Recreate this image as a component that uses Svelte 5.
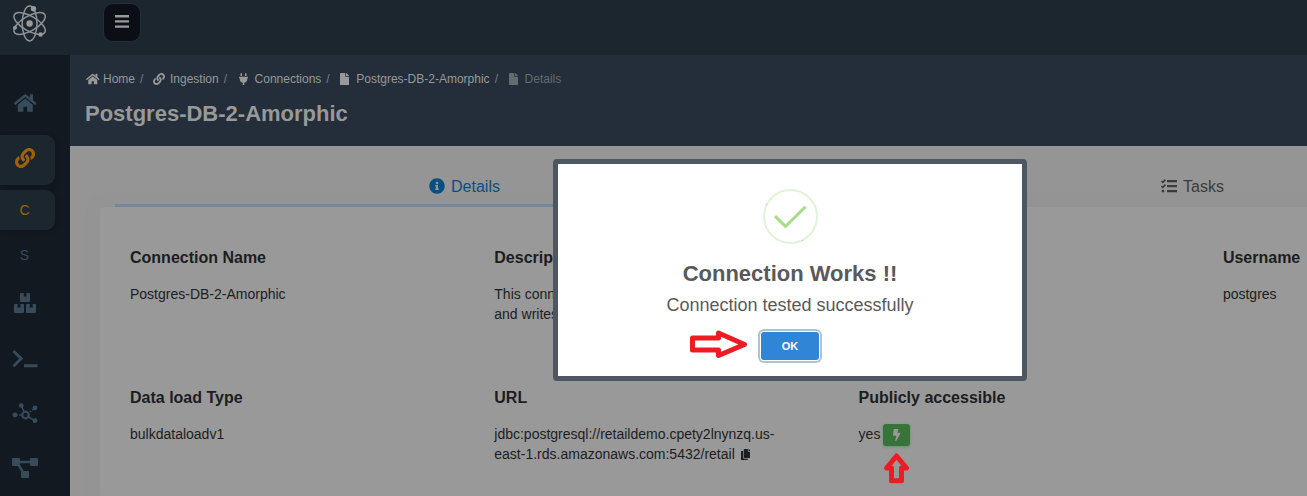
<script>
  const icons = {
    home: { w: 576, d: 'M280.37 148.26L96 300.11V464a16 16 0 0 0 16 16l112.06-.29a16 16 0 0 0 15.92-16V368a16 16 0 0 1 16-16h64a16 16 0 0 1 16 16v95.64a16 16 0 0 0 16 16.05L464 480a16 16 0 0 0 16-16V300L295.67 148.26a12.19 12.19 0 0 0-15.3 0zM571.6 251.47L488 182.56V44.05a12 12 0 0 0-12-12h-56a12 12 0 0 0-12 12v72.61L318.47 43a48 48 0 0 0-61 0L4.34 251.47a12 12 0 0 0-1.6 16.9l25.5 31A12 12 0 0 0 45.15 301l235.22-193.74a12.19 12.19 0 0 1 15.3 0L530.9 301a12 12 0 0 0 16.9-1.6l25.5-31a12 12 0 0 0-1.7-16.93z' },
    link: { w: 512, d: 'M326.612 185.391c59.747 59.809 58.927 155.698.36 214.59-.11.12-.24.25-.36.37l-67.2 67.2c-59.27 59.27-155.699 59.262-214.96 0-59.27-59.26-59.27-155.7 0-214.96l37.106-37.106c9.84-9.84 26.786-3.3 27.294 10.606.648 17.722 3.826 35.527 9.69 52.721 1.986 5.822.567 12.262-3.783 16.612l-13.087 13.087c-28.026 28.026-28.905 73.66-1.155 101.96 28.024 28.579 74.086 28.749 102.325.51l67.2-67.19c28.191-28.191 28.073-73.757 0-101.83-3.701-3.694-7.429-6.564-10.341-8.569a16.037 16.037 0 0 1-6.947-12.606c-.396-10.567 3.348-21.456 11.698-29.806l21.054-21.055c5.521-5.521 14.182-6.199 20.584-1.731a152.482 152.482 0 0 1 20.522 17.197zM467.547 44.449c-59.261-59.262-155.69-59.27-214.96 0l-67.2 67.2c-.12.12-.25.25-.36.37-58.566 58.892-59.387 154.781.36 214.59a152.454 152.454 0 0 0 20.521 17.196c6.402 4.468 15.064 3.789 20.584-1.731l21.054-21.055c8.35-8.35 12.094-19.239 11.698-29.806a16.037 16.037 0 0 0-6.947-12.606c-2.912-2.005-6.64-4.875-10.341-8.569-28.073-28.073-28.191-73.639 0-101.83l67.2-67.19c28.239-28.239 74.3-28.069 102.325.51 27.75 28.3 26.872 73.934-1.155 101.96l-13.087 13.087c-4.35 4.35-5.769 10.79-3.783 16.612 5.864 17.194 9.042 34.999 9.69 52.721.509 13.906 17.454 20.446 27.294 10.606l37.106-37.106c59.271-59.259 59.271-155.699.001-214.959z' },
    plug: { w: 384, d: 'M320,32a32,32,0,0,0-64,0v96h64Zm48,128H16A16,16,0,0,0,0,176v32a16,16,0,0,0,16,16H32v32A160.07,160.07,0,0,0,160,412.8V512h64V412.8A160.07,160.07,0,0,0,352,256V224h16a16,16,0,0,0,16-16V176A16,16,0,0,0,368,160ZM128,32a32,32,0,0,0-64,0v96h64Z' },
    file: { w: 384, d: 'M224 136V0H24C10.7 0 0 10.7 0 24v464c0 13.3 10.7 24 24 24h336c13.3 0 24-10.7 24-24V160H248c-13.2 0-24-10.8-24-24zm160-14.1v6.1H256V0h6.1c6.4 0 12.5 2.5 17 7l97.9 98c4.5 4.5 7 10.6 7 16.9z' },
    copy: { w: 448, d: 'M320 448v40c0 13.255-10.745 24-24 24H24c-13.255 0-24-10.745-24-24V120c0-13.255 10.745-24 24-24h72v296c0 30.879 25.121 56 56 56h168zm0-344V0H152c-13.255 0-24 10.745-24 24v368c0 13.255 10.745 24 24 24h272c13.255 0 24-10.745 24-24V128H344c-13.2 0-24-10.8-24-24zm120.971-31.029L375.029 7.029A24 24 0 0 0 358.059 0H352v96h96v-6.059a24 24 0 0 0-7.029-16.97z' },
    bolt: { w: 320, d: 'M296 160H180.6l42.6-129.8C227.2 15 215.7 0 200 0H56C44 0 33.8 8.9 32.2 20.8l-32 240C-1.7 275.2 9.5 288 24 288h118.7L96.6 482.5c-3.6 15.2 8 29.5 23.3 29.5 8.4 0 16.4-4.4 20.8-12l176-304c9.3-15.9-2.2-36-20.7-36z' },
    info: { w: 512, d: 'M256 8C119.043 8 8 119.083 8 256c0 136.997 111.043 248 248 248s248-111.003 248-248C504 119.083 392.957 8 256 8zm0 110c23.196 0 42 18.804 42 42s-18.804 42-42 42-42-18.804-42-42 18.804-42 42-42zm56 254c0 6.627-5.373 12-12 12h-88c-6.627 0-12-5.373-12-12v-24c0-6.627 5.373-12 12-12h12v-64h-12c-6.627 0-12-5.373-12-12v-24c0-6.627 5.373-12 12-12h64c6.627 0 12 5.373 12 12v100h12c6.627 0 12 5.373 12 12v24z' }
  };
  const crumbs = [
    { icon: 'home', label: 'Home' },
    { icon: 'link', label: 'Ingestion' },
    { icon: 'plug', label: 'Connections' },
    { icon: 'file', label: 'Postgres-DB-2-Amorphic' },
    { icon: 'file', label: 'Details' }
  ];
</script>

{#snippet fa(name, size)}
  <svg class="fa" viewBox="0 0 {icons[name].w} 512" width={(icons[name].w / 512) * size} height={size}><path d={icons[name].d} /></svg>
{/snippet}

<div class="app">
  <header class="topbar">
    <div class="brand">
      <svg width="37" height="41" viewBox="0 0 37 41" fill="none" stroke="#8f9396" stroke-width="1.5">
        <ellipse cx="18.6" cy="20.5" rx="7.4" ry="17.4" />
        <ellipse cx="18.6" cy="20.5" rx="7.4" ry="17.6" transform="rotate(60 18.6 20.5)" />
        <ellipse cx="18.6" cy="20.5" rx="7.4" ry="17.6" transform="rotate(-60 18.6 20.5)" />
        <g fill="#999" stroke="none"><circle cx="18.6" cy="20.5" r="3.2" /><circle cx="22.5" cy="5.7" r="2.7" /><circle cx="4" cy="24.8" r="2" /><circle cx="29.6" cy="31.5" r="2.3" /></g>
      </svg>
    </div>
    <button class="menu" aria-label="Menu">
      <svg width="14" height="13" viewBox="0 0 14 13"><path d="M0 0h14v2.4H0zM0 5.2h14v2.4H0zM0 10.4h14v2.4H0z" /></svg>
    </button>
  </header>

  <div class="body">
    <nav class="side">
      <div class="item home">{@render fa('home', 20)}</div>
      <div class="item active">{@render fa('link', 20)}</div>
      <div class="item sub active">C</div>
      <div class="item sub">S</div>
      <div class="item tool boxes">
        <svg width="24" height="20" viewBox="0 0 24 20"><path d="M8 0h2.8v4l1.2-.8 1.4.8V0H16q1 0 1 1v7q0 1-1 1H8Q7 9 7 8V1q0-1 1-1zM2 11h2.6v4l1.4-.8 1.4.8v-4H10q1 0 1 1v7q0 1-1 1H2q-1 0-1-1v-7q0-1 1-1zM14 11h2.8v4l1.4-.8 1.4.8v-4H22q1 0 1 1v7q0 1-1 1h-8q-1 0-1-1v-7q0-1 1-1z" /></svg>
      </div>
      <div class="item tool">
        <svg width="26" height="20" viewBox="0 0 26 20" fill="none" stroke="#374b5b" stroke-width="2.9" stroke-linejoin="miter"><path d="M1.4 2l7.8 7.6-7.8 7.6M12 16.8h13.5" /></svg>
      </div>
      <div class="item tool">
        <svg width="26" height="21" viewBox="0 0 26 21"><circle cx="13.5" cy="12" r="3.3" fill="none" stroke="#374b5b" stroke-width="2.2" /><path d="M9.5 3l2.5 5.8M16 13.5l7 4.3M3 12h2.8M7.2 12h2M17.7 9l1.4-1M20.2 7.2l2-1.6" fill="none" stroke="#374b5b" stroke-width="1.5" /><circle cx="9.3" cy="2.6" r="2.4" /><circle cx="2.9" cy="12" r="2.4" /><circle cx="23" cy="5" r="2.4" /><circle cx="23" cy="17.7" r="2.4" /></svg>
      </div>
      <div class="item tool flow">
        <svg width="26" height="20" viewBox="0 0 26 20"><rect width="8" height="8" rx="1" /><rect x="18" width="8" height="8" rx="1" /><rect x="9" y="13" width="8" height="7" rx="1" /><path d="M7 2.8h12v2.5H7zM5.2 7l2.2-1.3 4.4 7.2-2.2 1.3z" /></svg>
      </div>
    </nav>

    <main>
      <section class="heading">
        <div class="crumbs">
          {#each crumbs as c, i}
            <span class="crumb c{i}"><i>{@render fa(c.icon, 12)}</i><span class="label">{c.label}</span></span>{#if i < 4}<span class="slash">/</span>{/if}
          {/each}
        </div>
        <h1>Postgres-DB-2-Amorphic</h1>
      </section>

      <section class="content">
        <div class="tabs">
          <div class="tab selected">{@render fa('info', 16)}<span>Details</span></div>
          <div class="tab">
            <svg width="16" height="14" viewBox="0 0 16 14"><path d="M6 1h10v2.2H6zM6 6h10v2.2H6zM6 11h10v2.2H6z" /><path d="M.5 2l1.3 1.3L4.5.6M.5 7l1.3 1.3 2.7-2.7" fill="none" stroke="#393b3d" stroke-width="1.6" /><circle cx="2" cy="12.1" r="1.4" /></svg><span>Tasks</span>
          </div>
        </div>
        <div class="card">
          <div class="field"><h2>Connection Name</h2><p>Postgres-DB-2-Amorphic</p></div>
          <div class="field"><h2>Description</h2><p>This connection reads data<br />and writes</p></div>
          <div class="field"></div>
          <div class="field"><h2>Username</h2><p>postgres</p></div>
          <div class="field"><h2>Data load Type</h2><p>bulkdataloadv1</p></div>
          <div class="field"><h2>URL</h2><p>jdbc:postgresql://retaildemo.cpety2lnynzq.us-<br />east-1.rds.amazonaws.com:5432/retail <span class="copy">{@render fa('copy', 11)}</span></p></div>
          <div class="field"><h2>Publicly accessible</h2><p class="access">yes <button class="test" aria-label="Test connection">{@render fa('bolt', 12)}</button></p></div>
        </div>
      </section>
    </main>
  </div>

  <div class="modal" role="dialog">
    <svg class="success" width="56" height="56" viewBox="0 0 56 56" fill="none"><circle cx="28.5" cy="28.5" r="26.5" stroke="#e1f3d8" stroke-width="2" /><path d="M13.1 28.1l10.4 10.4 20-19.8" stroke="#a5dc86" stroke-width="3" /><path d="M4 16l1 .8M40 52l1 .8" stroke="#a5dc86" /></svg>
    <h3>Connection Works !!</h3>
    <p>Connection tested successfully</p>
    <button>OK</button>
  </div>

  <svg class="arrow right" width="58" height="28" viewBox="0 0 58 28"><path d="M2.5 8h26V3L54.5 14.5 28.5 25.5v-5.5h-26z" /></svg>
  <svg class="arrow up" width="26" height="32" viewBox="0 0 26 32"><path d="M12.5 3l10 12H17.5V27.7h-10V15H2.6z" /></svg>
</div>

<style>
  :global(body) { margin: 0; overflow: hidden; }
  * { box-sizing: border-box; }
  h1, h2, h3, p { margin: 0; }
  .app { position: relative; width: 1307px; height: 496px; overflow: hidden; display: flex; flex-direction: column; background: #959595; font-family: "Liberation Sans", Arial, sans-serif; font-size: 14px; color: #1c1d1f; }
  .fa { display: block; fill: currentColor; flex: none; }
  .topbar { height: 55px; flex: none; display: flex; background: #1c262e; }
  .brand { width: 103px; padding: 3px 0 0 11px; }
  .menu { width: 38px; height: 39px; margin-top: 3px; padding: 0 0 2px; border: 1px solid #212e3b; border-radius: 10px; background: #0b0e15; display: flex; align-items: center; justify-content: center; fill: #999; }
  .body { display: flex; height: 441px; }
  .side { width: 70px; flex: none; background: #131920; color: #374b5b; fill: #374b5b; }
  .item { width: 55px; height: 50px; display: flex; align-items: center; justify-content: center; padding-right: 5px; }
  .item.home { height: 60px; margin: 18px 0 2px; }
  .item.active { background: #1c262e; color: #a36105; border-radius: 0 9px 9px 0; box-shadow: 1px 1px 4px #10151b; }
  .item:nth-child(2) { padding-bottom: 4px; }
  .item.sub { height: 40px; margin-top: 5px; padding-right: 6px; }
  .item.tool { height: 55px; }
  .item.sub + .tool { margin-top: 1px; }
  .item.boxes, .item.flow { padding-bottom: 2px; }
  main { flex: 1; min-width: 0; }
  .heading { height: 91px; background: #232e3a; color: #999; padding: 16px 15px 0; }
  .crumbs { display: flex; align-items: center; height: 16px; font-size: 12px; }
  .crumb { display: flex; align-items: center; }
  .crumb i { width: 18px; }
  .c0 i { padding-left: 1px; }
  .c1 i { width: 17px; }
  .c2 i { width: 16px; }
  .c3 i, .c4 i { width: 16px; }
  .c2 { margin-left: 2px; }
  .c3 { margin-left: 1px; }
  .c4 { color: #646b71; margin-left: 1px; }
  .slash { margin: 0 9.6px 0 5px; color: #777d82; }
  h1 { margin-top: 14px; font-size: 22px; line-height: 25px; }
  .content { padding: 15px 0 0 30px; height: 350px; background: #959595; }
  .tabs { width: 1402px; margin-left: 15px; display: flex; height: 46px; }
  .tab { width: 701px; flex: none; display: flex; align-items: center; justify-content: center; padding: 4px 3px 0 0; font-size: 16px; gap: 6px; border-bottom: 1px solid #929292; color: #393b3d; fill: #393b3d; }
  .tab span { padding-top: 2px; }
  .tab.selected { color: #074f80; border-bottom: 3px solid #72879a; padding-top: 6px; }
  .tab.selected span { margin-right: -1px; }
  .tab:last-child { padding-left: 55px; }
  .card { width: 1487px; height: 300px; background: #999; border-radius: 4px 0 0; box-shadow: 0 0 14px #8f8f8f70; display: grid; grid-template-columns: repeat(4, 364.3px); grid-auto-rows: 140px; padding: 41px 0 0 30px; }
  h2 { font-size: 16px; line-height: 20px; }
  .field p { margin-top: 16px; line-height: 20px; white-space: nowrap; }
  .copy { display: inline-block; vertical-align: -1px; margin-left: 2px; }
  .access { display: flex; gap: 3px; }
  .test { width: 27px; height: 22px; padding: 0; display: flex; align-items: center; justify-content: center; border: 0; border-radius: 3px; background: #38743a; color: #999; box-shadow: 0 1px 3px #659066; }
  .modal { position: absolute; left: 553px; top: 159px; width: 474px; height: 222px; background: #fff; border: 5px solid #4e5761; border-radius: 4px; display: flex; flex-direction: column; align-items: center; padding-top: 24px; color: #595959; }
  h3 { margin-top: 17px; font-size: 22px; line-height: 26px; }
  .modal p { margin-top: 8px; font-size: 18px; line-height: 20px; }
  .modal button { margin-top: 17px; width: 58px; height: 28px; border: 0; border-radius: 3px; background: #3085d6; color: #fff; font: bold 11px "Liberation Sans", Arial, sans-serif; box-shadow: 0 0 0 1px #fff, 0 0 0 3px #afc3d7; padding: 0; }
  .arrow { position: absolute; fill: none; stroke: #ed1c24; stroke-width: 5; stroke-linejoin: round; }
  .arrow.right { left: 690px; top: 330px; }
  .arrow.up { left: 884px; top: 453px; }
</style>
